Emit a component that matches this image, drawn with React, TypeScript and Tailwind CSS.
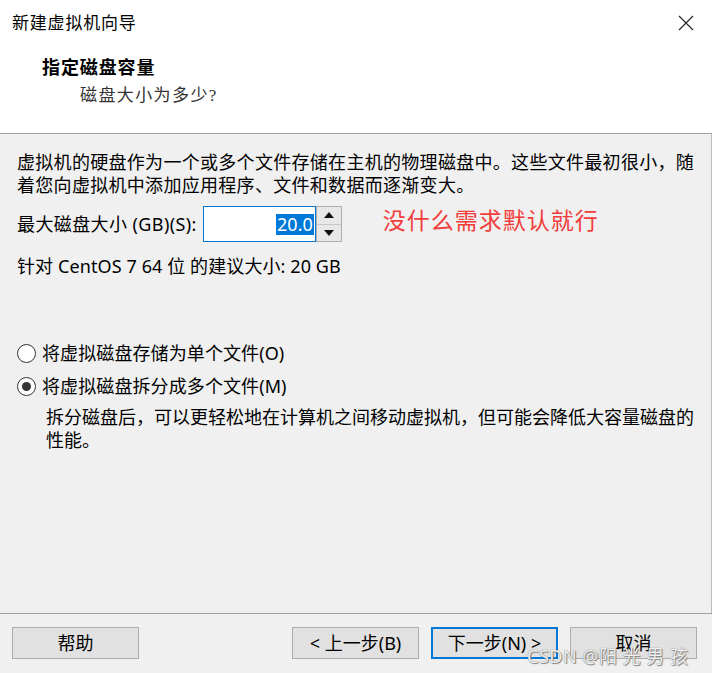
import React from "react";

const sans = "font-['Noto_Sans','Noto_Sans_CJK_SC',sans-serif]";

function Radio({ checked, label }: { checked?: boolean; label: string }) {
  return (
    <div className="flex items-center h-[24px]">
      <div className="w-[19px] h-[19px] rounded-full border border-[#333] bg-white flex items-center justify-center">
        {checked && <div className="w-[9px] h-[9px] rounded-full bg-[#333]" />}
      </div>
      <span className="ml-[6px] text-[18px] leading-[24px] tracking-[0.1px]">{label}</span>
    </div>
  );
}

function Btn({ children, focused }: { children: React.ReactNode; focused?: boolean }) {
  return (
    <button
      className={
        "w-[127px] h-[32px] bg-[#e1e1e1] text-[18px] text-black flex items-center justify-center " +
        (focused ? "border-2 border-[#0078d7]" : "border border-[#adadad]")
      }
    >
      {children}
    </button>
  );
}

export default function App() {
  return (
    <div className={`w-[712px] h-[673px] bg-[#f0f0f0] relative flex flex-col overflow-hidden text-black ${sans}`}>
      {/* header */}
      <div className="bg-white h-[134px] border-b border-[#a0a0a0] shrink-0">
        <div className="h-[46px] flex items-center justify-between pl-[12px] pr-[18px]">
          <span className="text-[17px] tracking-[0.8px]">新建虚拟机向导</span>
          <svg width="16" height="16" viewBox="0 0 16 16">
            <path d="M1 1L15 15M15 1L1 15" stroke="#222" strokeWidth="1.1" fill="none" />
          </svg>
        </div>
        <div className="mt-[10px] ml-[42px] h-[24px] leading-[24px] text-[18px] font-bold tracking-[0.9px] font-['Liberation_Serif','Noto_Sans_CJK_SC',serif]">
          指定磁盘容量
        </div>
        <div className="mt-[4px] ml-[80px] h-[24px] leading-[24px] text-[17px] text-[#333] tracking-[1.4px] font-['Liberation_Serif','Noto_Sans_CJK_SC',serif]">
          磁盘大小为多少?
        </div>
      </div>

      {/* body */}
      <div className="flex-1 flex flex-col pl-[17px] pr-[10px] border-r border-[#bdbdbd]">
        <p className="mt-[17px] text-[18px] leading-[23px] tracking-[0.3px]">
          虚拟机的硬盘作为一个或多个文件存储在主机的物理磁盘中。这些文件最初很小，随着您向虚拟机中添加应用程序、文件和数据而逐渐变大。
        </p>

        <div className="mt-[9px] h-[36px] flex items-center">
          <span className="text-[18px] tracking-[0.4px]">最大磁盘大小 (GB)(S):</span>
          <div className="ml-[6px] w-[113px] h-[36px] border border-[#0078d7] bg-white flex items-center justify-end pr-[1px]">
            <span className="bg-[#0078d7] text-white text-[18px] leading-[21px] px-[1px]">20.0</span>
          </div>
          <div className="w-[26px] h-[36px] border border-[#adadad] bg-[#f0f0f0] flex flex-col">
            <div className="flex-1 flex items-center justify-center border-b border-[#c8c8c8] bg-[#e8e8e8]">
              <svg width="10" height="6" viewBox="0 0 10 6"><path d="M5 0L10 6H0z" fill="#111" /></svg>
            </div>
            <div className="flex-1 flex items-center justify-center bg-[#e8e8e8]">
              <svg width="10" height="6" viewBox="0 0 10 6"><path d="M0 0H10L5 6z" fill="#111" /></svg>
            </div>
          </div>
          <span className="ml-[41px] mb-[8px] text-[23px] text-[#f23d3d] tracking-[1px]">没什么需求默认就行</span>
        </div>

        <p className="mt-[13px] text-[18px] leading-[23px] tracking-[0.1px]">针对 CentOS 7 64 位 的建议大小: 20 GB</p>

        <div className="mt-[63px]">
          <Radio label="将虚拟磁盘存储为单个文件(O)" />
        </div>
        <div className="mt-[9px]">
          <Radio checked label="将虚拟磁盘拆分成多个文件(M)" />
        </div>
        <p className="mt-[8px] ml-[29px] text-[18px] leading-[23px]">
          拆分磁盘后，可以更轻松地在计算机之间移动虚拟机，但可能会降低大容量磁盘的性能。
        </p>
      </div>

      {/* footer */}
      <div className="shrink-0 border-t border-[#a0a0a0] pt-[13px] pb-[14px] pl-[12px] pr-[15px] flex justify-between">
        <Btn>帮助</Btn>
        <div className="flex gap-[12px]">
          <Btn>&lt; 上一步(B)</Btn>
          <Btn focused>下一步(N) &gt;</Btn>
          <Btn>取消</Btn>
        </div>
      </div>

      <div className="absolute left-[527px] top-[643px] text-[18px] text-white/90 tracking-[0.5px] [text-shadow:0_0_1px_#555,1px_1px_1px_#888]">
        CSDN @阳 光 男 孩
      </div>
    </div>
  );
}
